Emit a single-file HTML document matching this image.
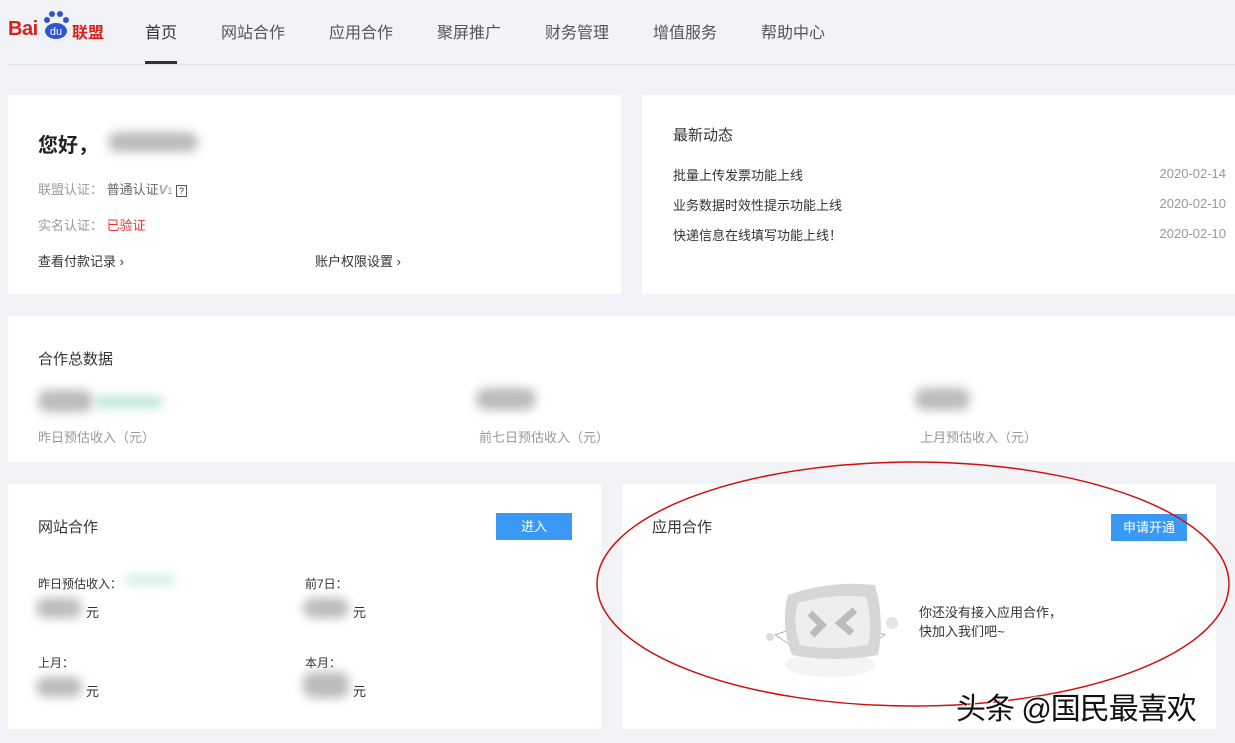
<!DOCTYPE html><html><head><meta charset="utf-8"><style>
*{margin:0;padding:0;box-sizing:border-box}
body{width:1235px;height:743px;background:#f2f3f7;font-family:"Liberation Sans","Noto Sans CJK SC",sans-serif;position:relative;overflow:hidden;color:#333}
.a{position:absolute;white-space:nowrap}
.card{position:absolute;background:#fff}
.nav{font-size:16px;color:#555;top:19px}
.g{color:#999;font-size:13px}
.s{font-size:13px;color:#333}
.blur{position:absolute;background:#bbb;border-radius:10px;filter:blur(5px)}
.btn{position:absolute;background:#3a99f5;color:#fff;font-size:13px;text-align:center}
.d{right:9px}
</style></head><body>
<div class="a" style="left:8px;top:18px;font:bold 20px 'Liberation Sans',sans-serif;color:#d8211b;letter-spacing:-0.5px">Bai</div>
<div class="a" style="left:40px;top:8px;width:32px;height:32px">
<svg width="32" height="32"><circle cx="7" cy="12" r="3" fill="#2f55d4"/><circle cx="12" cy="6" r="3" fill="#2f55d4"/><circle cx="20" cy="6" r="3" fill="#2f55d4"/><circle cx="26" cy="12" r="3" fill="#2f55d4"/><ellipse cx="16" cy="23" rx="11" ry="8" fill="#2f55d4"/><text x="16" y="27" font-size="11" fill="#fff" text-anchor="middle" font-family="Liberation Sans">du</text></svg></div>
<div class="a" style="left:72px;top:19px;font-size:16px;font-weight:bold;color:#d8211b">联盟</div>
<div class="a nav" style="left:145px;color:#333">首页</div>
<div class="a" style="left:145px;top:61px;width:32px;height:3px;background:#333"></div>
<div class="a nav" style="left:221px">网站合作</div>
<div class="a nav" style="left:329px">应用合作</div>
<div class="a nav" style="left:437px">聚屏推广</div>
<div class="a nav" style="left:545px">财务管理</div>
<div class="a nav" style="left:653px">增值服务</div>
<div class="a nav" style="left:761px">帮助中心</div>
<div class="a" style="left:8px;top:64px;width:1227px;height:1px;background:#e3e4e8"></div>

<div class="card" style="left:8px;top:95px;width:613px;height:199px"></div>
<div class="a" style="left:38px;top:129px;font-size:20px;font-weight:bold;color:#222">您好，</div>
<div class="blur" style="left:108px;top:132px;width:90px;height:20px"></div>
<div class="a g" style="left:38px;top:179px">联盟认证： <span style="color:#666">普通认证</span><span style="color:#aaa;font-style:italic;font-weight:bold">V</span><span style="font-size:9px">1</span> <span style="border:1px solid #555;font-size:9px;color:#333;padding:0 2px">?</span></div>
<div class="a g" style="left:38px;top:215px">实名认证： <span style="color:#e33">已验证</span></div>
<div class="a s" style="left:38px;top:251px">查看付款记录 ›</div>
<div class="a s" style="left:315px;top:251px">账户权限设置 ›</div>

<div class="card" style="left:642px;top:95px;width:593px;height:199px"></div>
<div class="a" style="left:673px;top:124px;font-size:15px">最新动态</div>
<div class="a s" style="left:673px;top:165px">批量上传发票功能上线</div><div class="a g d" style="top:166px">2020-02-14</div>
<div class="a s" style="left:673px;top:195px">业务数据时效性提示功能上线</div><div class="a g d" style="top:196px">2020-02-10</div>
<div class="a s" style="left:673px;top:225px">快递信息在线填写功能上线！</div><div class="a g d" style="top:226px">2020-02-10</div>

<div class="card" style="left:8px;top:316px;width:1227px;height:146px"></div>
<div class="a" style="left:38px;top:348px;font-size:15px">合作总数据</div>
<div class="blur" style="left:38px;top:390px;width:55px;height:22px"></div>
<div class="blur" style="left:95px;top:396px;width:68px;height:12px;background:#bde8d6"></div>
<div class="blur" style="left:476px;top:388px;width:60px;height:22px"></div>
<div class="blur" style="left:915px;top:388px;width:55px;height:22px"></div>
<div class="a g" style="left:38px;top:427px">昨日预估收入（元）</div>
<div class="a g" style="left:479px;top:427px">前七日预估收入（元）</div>
<div class="a g" style="left:920px;top:427px">上月预估收入（元）</div>

<div class="card" style="left:8px;top:484px;width:593px;height:245px"></div>
<div class="a" style="left:38px;top:516px;font-size:15px">网站合作</div>
<div class="btn" style="left:496px;top:513px;width:76px;height:27px;line-height:27px">进入</div>
<div class="a" style="left:38px;top:575px;font-size:12px">昨日预估收入：</div>
<div class="blur" style="left:125px;top:576px;width:50px;height:8px;background:#c6ecdc"></div>
<div class="a" style="left:305px;top:575px;font-size:12px">前7日：</div>
<div class="blur" style="left:36px;top:598px;width:46px;height:20px"></div><div class="a s" style="left:86px;top:602px">元</div>
<div class="blur" style="left:303px;top:598px;width:46px;height:20px"></div><div class="a s" style="left:353px;top:602px">元</div>
<div class="a" style="left:38px;top:654px;font-size:12px">上月：</div>
<div class="a" style="left:305px;top:654px;font-size:12px">本月：</div>
<div class="blur" style="left:36px;top:677px;width:46px;height:20px"></div><div class="a s" style="left:86px;top:681px">元</div>
<div class="blur" style="left:303px;top:672px;width:46px;height:26px"></div><div class="a s" style="left:353px;top:681px">元</div>

<div class="card" style="left:622px;top:484px;width:594px;height:245px"></div>
<div class="a" style="left:652px;top:516px;font-size:15px">应用合作</div>
<div class="btn" style="left:1111px;top:514px;width:76px;height:27px;line-height:27px">申请开通</div>
<svg class="a" style="left:760px;top:575px" width="150" height="110">
<polygon points="15,60 70,40 125,60 70,95" fill="none" stroke="#999" stroke-width="0.7"/>
<ellipse cx="70" cy="90" rx="45" ry="12" fill="#f4f4f4"/>
<path d="M28,20 Q70,5 115,10 Q125,45 118,80 Q75,88 32,80 Q20,50 28,20Z" fill="#d6d6d6"/>
<path d="M38,28 Q72,18 106,22 Q113,48 108,70 Q72,76 40,70 Q32,48 38,28Z" fill="#eee"/>
<path d="M50,38 L62,50 L52,60" stroke="#bbb" stroke-width="7" fill="none"/>
<path d="M95,35 L80,48 L92,58" stroke="#bbb" stroke-width="7" fill="none"/>
<circle cx="10" cy="62" r="4" fill="#ddd"/><circle cx="132" cy="48" r="6" fill="#e5e5e5"/>
</svg>
<div class="a" style="left:919px;top:603px;font-size:13px;line-height:19px">你还没有接入应用合作，<br>快加入我们吧~</div>

<svg class="a" style="left:0;top:0" width="1235" height="743"><ellipse cx="913" cy="584" rx="316" ry="122" fill="none" stroke="#d01010" stroke-width="1.5"/></svg>
<div class="a" style="left:956px;top:684px;font-size:30px;color:#111;letter-spacing:-1px;text-shadow:1px 1px 0 #fff,-1px -1px 0 #fff">头条 @国民最喜欢</div>
</body></html>
